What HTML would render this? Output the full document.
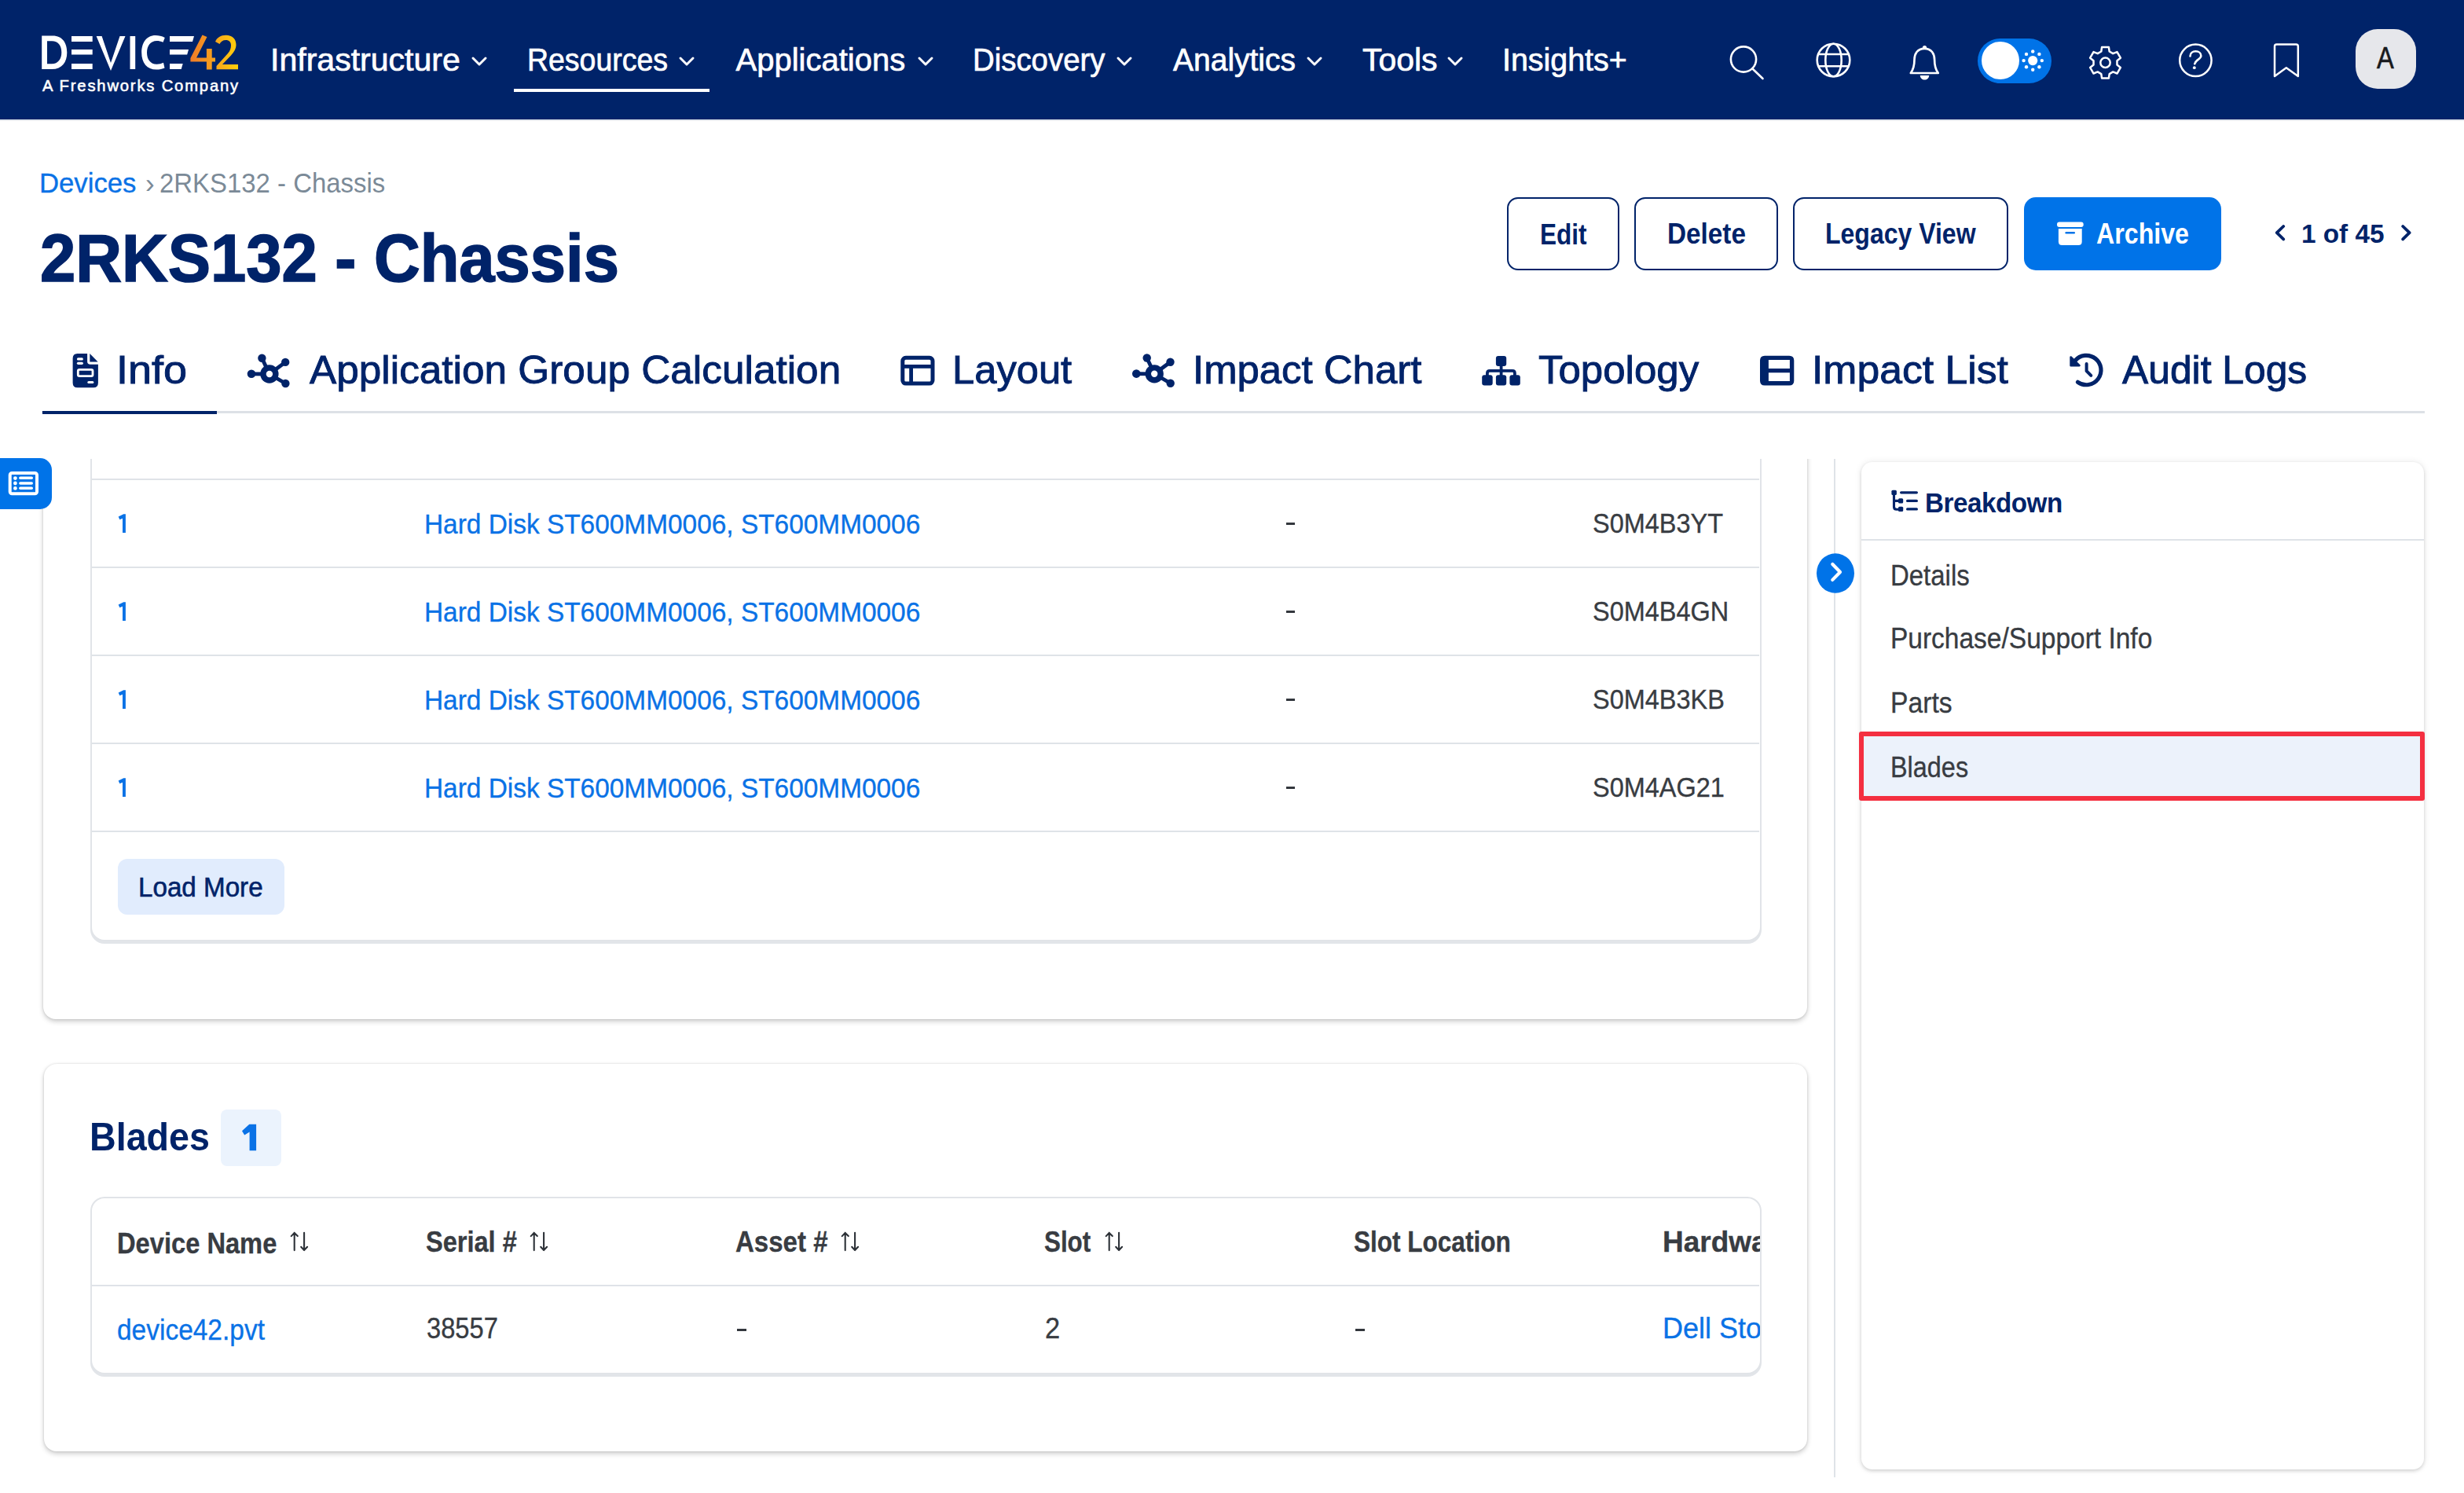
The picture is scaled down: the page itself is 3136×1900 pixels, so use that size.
<!DOCTYPE html>
<html><head><meta charset="utf-8">
<style>
*{margin:0;padding:0;box-sizing:border-box}
html,body{width:3136px;height:1900px;overflow:hidden;background:#fff;font-family:"Liberation Sans",sans-serif}
.a{position:absolute}
.t{position:absolute;white-space:nowrap;line-height:1}
.nav{color:#fff;-webkit-text-stroke:0.7px #fff}
.btn{position:absolute;top:251px;height:93px;border:2.5px solid #002369;border-radius:14px;background:#fff}
.navy{color:#002369}
.tab{color:#002369;-webkit-text-stroke:0.9px #002369}
.g{color:#383c42;-webkit-text-stroke:0.35px #383c42}
.lk{color:#0a72e6;-webkit-text-stroke:0.35px #0a72e6}
.card{position:absolute;background:#fff;border-radius:16px;box-shadow:0 3px 6px rgba(0,0,0,0.2),0 0 3px rgba(0,0,0,0.12)}
.tbl{position:absolute;background:#fff;border:2px solid #e1e4e8;border-radius:18px;box-shadow:0 3px 0 #e2e5e9}
.hl{position:absolute;height:2px;background:#dfe3e8}
svg{position:absolute;overflow:visible}
</style></head>
<body>
<div class="a" style="left:0;top:0;width:3136px;height:152px;background:#002369"></div>
<div class="a" style="left:0;top:152px;width:3136px;height:2px;background:#e6e9ee"></div>
<svg style="left:0;top:0" width="320" height="130" viewBox="0 0 320 130">
<defs><linearGradient id="lg" x1="242" y1="0" x2="303" y2="0" gradientUnits="userSpaceOnUse"><stop offset="0" stop-color="#ef7a28"/><stop offset="0.5" stop-color="#f7a21d"/><stop offset="1" stop-color="#ffd00a"/></linearGradient></defs>
<path d="M53.2 45.4 H67 C80 45.4 85.3 55 85.3 66.7 C85.3 79 79 88 66 88 H53.2 Z M60 52.3 V81.2 H66 C74 81.2 78.3 75 78.3 66.7 C78.3 58 74 52.3 66 52.3 Z" fill="#fff" fill-rule="evenodd"/>
<rect x="91" y="46" width="26.7" height="7" fill="#fff"/>
<rect x="91" y="63" width="26.7" height="6.5" fill="#fff"/>
<rect x="91" y="81" width="26.7" height="7" fill="#fff"/>
<path d="M122.6 46 H129.6 L141 80 L152.5 46 H159.5 L141 90 Z" fill="#fff"/>
<rect x="165.5" y="46" width="6.7" height="42" fill="#fff"/>
<path d="M209.8 48 C206 46 202 45.1 198 45.1 C186 45.1 180.2 55 180.2 67 C180.2 80 187 88.6 199 88.6 C203 88.6 207 87.8 209.5 86.5 L208 79.8 C205.5 81 202.5 81.8 199.5 81.8 C191.5 81.8 187 75.5 187 67 C187 58.5 191.5 52 199.5 52 C202 52 205 52.6 207.5 53.8 Z" fill="#fff"/>
<path d="M216 46 H247 L245 53 H216 Z" fill="#fff"/>
<path d="M216 63 H240 L238.2 69.5 H216 Z" fill="#fff"/>
<path d="M216 81 H232.7 L230.7 88 H216 Z" fill="#fff"/>
<path d="M257.5 44.5 L263.5 47 L250 73.5 H262.9 V62 H269.7 V73.5 H274 V78.6 H269.7 V88.6 H262.9 V78.6 H242.4 V74 Z" fill="url(#lg)"/>
<path d="M274 53 C276 48 281 44.8 287.5 44.8 C296 44.8 300.5 50 300.5 57 C300.5 62 298 66 294 70.5 L283 82 H303 V88.3 H275.5 V84 L290 68 C293 64.5 294 61 294 57.5 C294 53.5 291.5 51 287.5 51 C283.5 51 281 53 279.5 56 Z" fill="url(#lg)"/>
</svg>
<div class="t nav" style="left:53.80px;top:98.02px;font-size:21px;transform:scaleX(0.9618);transform-origin:0 0;-webkit-text-stroke:0.6px #fff;letter-spacing:1.9px">A Freshworks Company</div>
<div class="t nav" style="left:344.00px;top:56.14px;font-size:40px;transform:scaleX(1.0261);transform-origin:0 0;">Infrastructure</div>
<svg style="left:600px;top:72px" width="20" height="12" viewBox="0 0 20 12"><path d="M2 2 L10 10 L18 2" fill="none" stroke="#fff" stroke-width="3" stroke-linecap="round" stroke-linejoin="round"/></svg>
<div class="t nav" style="left:671.00px;top:56.14px;font-size:40px;transform:scaleX(0.9358);transform-origin:0 0;">Resources</div>
<svg style="left:864px;top:72px" width="20" height="12" viewBox="0 0 20 12"><path d="M2 2 L10 10 L18 2" fill="none" stroke="#fff" stroke-width="3" stroke-linecap="round" stroke-linejoin="round"/></svg>
<div class="t nav" style="left:936.50px;top:56.14px;font-size:40px;">Applications</div>
<svg style="left:1168px;top:72px" width="20" height="12" viewBox="0 0 20 12"><path d="M2 2 L10 10 L18 2" fill="none" stroke="#fff" stroke-width="3" stroke-linecap="round" stroke-linejoin="round"/></svg>
<div class="t nav" style="left:1238.00px;top:56.14px;font-size:40px;transform:scaleX(0.9593);transform-origin:0 0;">Discovery</div>
<svg style="left:1421px;top:72px" width="20" height="12" viewBox="0 0 20 12"><path d="M2 2 L10 10 L18 2" fill="none" stroke="#fff" stroke-width="3" stroke-linecap="round" stroke-linejoin="round"/></svg>
<div class="t nav" style="left:1493.00px;top:56.14px;font-size:40px;transform:scaleX(0.9748);transform-origin:0 0;">Analytics</div>
<svg style="left:1663px;top:72px" width="20" height="12" viewBox="0 0 20 12"><path d="M2 2 L10 10 L18 2" fill="none" stroke="#fff" stroke-width="3" stroke-linecap="round" stroke-linejoin="round"/></svg>
<div class="t nav" style="left:1734.00px;top:56.14px;font-size:40px;transform:scaleX(1.0220);transform-origin:0 0;">Tools</div>
<svg style="left:1842px;top:72px" width="20" height="12" viewBox="0 0 20 12"><path d="M2 2 L10 10 L18 2" fill="none" stroke="#fff" stroke-width="3" stroke-linecap="round" stroke-linejoin="round"/></svg>
<div class="t nav" style="left:1911.80px;top:56.14px;font-size:40px;transform:scaleX(0.9847);transform-origin:0 0;">Insights+</div>
<div class="a" style="left:654px;top:113px;width:249px;height:4px;background:#fff"></div>
<svg style="left:0;top:0" width="3136" height="152" viewBox="0 0 3136 152">
<g fill="none" stroke="#fff" stroke-width="2.6" stroke-linecap="round" stroke-linejoin="round">
<circle cx="2219" cy="75.5" r="16.1"/><path d="M2231 88 L2243.5 100"/>
<circle cx="2333.5" cy="76.5" r="20.8"/><ellipse cx="2333.5" cy="76.5" rx="10.2" ry="20.8"/><path d="M2314.5 69 H2352.5 M2314.5 84.2 H2352.5"/>
<path d="M2449.3 61.8 C2440 61.8 2436.5 69 2436.5 76 C2436.5 84 2435.5 88 2431.8 93 H2466.8 C2463 88 2462.1 84 2462.1 76 C2462.1 69 2458.6 61.8 2449.3 61.8 Z" stroke-width="2.7"/>
<g transform="translate(2679.5 79.8)"><path d="M-5.20 -14.28 L-4.39 -19.82 L4.39 -19.82 L5.20 -14.28 L9.77 -11.64 L14.97 -13.71 L19.36 -6.10 L14.97 -2.64 L14.97 2.64 L19.36 6.10 L14.97 13.71 L9.77 11.64 L5.20 14.28 L4.39 19.82 L-4.39 19.82 L-5.20 14.28 L-9.77 11.64 L-14.97 13.71 L-19.36 6.10 L-14.97 2.64 L-14.97 -2.64 L-19.36 -6.10 L-14.97 -13.71 L-9.77 -11.64 Z" stroke-width="2.5"/><circle r="6.2" stroke-width="2.5"/></g>
<circle cx="2794.4" cy="76.8" r="20.2" stroke-width="2.5"/>
<path d="M2787.5 71.5 C2787.5 67.5 2790.5 65.3 2794.5 65.3 C2798.5 65.3 2801.3 67.8 2801.3 71 C2801.3 75.5 2794.5 75.5 2793.3 81.3" stroke-width="2.6"/>
<path d="M2895 82.5 V59 Q2895 56.6 2897.4 56.6 H2922.4 Q2924.8 56.6 2924.8 59 V97 L2909.8 86.3 L2895 97 Z" stroke-width="2.5"/>
</g>
<g fill="#fff"><circle cx="2449.5" cy="60.5" r="2.6"/><path d="M2443.8 96 H2455.2 C2455.2 99.5 2452.5 101.5 2449.5 101.5 C2446.5 101.5 2443.8 99.5 2443.8 96 Z"/><circle cx="2792.8" cy="86.2" r="1.9"/></g>
<rect x="2517" y="49" width="94" height="57" rx="28.5" fill="#0073e8"/>
<circle cx="2546" cy="77" r="24" fill="#fff"/>
<g fill="#fff"><circle cx="2587.2" cy="77.1" r="6.1"/><circle cx="2587.2" cy="65.5" r="2.2"/><circle cx="2587.2" cy="88.7" r="2.2"/><circle cx="2575.6" cy="77.1" r="2.2"/><circle cx="2598.8" cy="77.1" r="2.2"/><circle cx="2579" cy="68.9" r="2.2"/><circle cx="2595.4" cy="68.9" r="2.2"/><circle cx="2579" cy="85.3" r="2.2"/><circle cx="2595.4" cy="85.3" r="2.2"/></g>
<rect x="2998" y="37" width="77" height="76" rx="28" fill="#e6e7eb"/>
</svg>
<div class="t " style="left:3025.40px;top:54.73px;font-size:38px;transform:scaleX(0.8587);transform-origin:0 0;color:#18191c;-webkit-text-stroke:0.6px #18191c">A</div>
<div class="t lk" style="left:50.00px;top:215.37px;font-size:35px;transform:scaleX(0.9917);transform-origin:0 0;">Devices</div>
<div class="t " style="left:185.00px;top:215.37px;font-size:35px;color:#7b8a97">›</div>
<div class="t " style="left:203.00px;top:215.37px;font-size:35px;transform:scaleX(0.9404);transform-origin:0 0;color:#7b8a97">2RKS132 - Chassis</div>
<div class="t navy" style="left:51.00px;top:285.55px;font-size:85px;font-weight:bold;transform:scaleX(0.9569);transform-origin:0 0;-webkit-text-stroke:1.6px #002369">2RKS132 - Chassis</div>
<div class="btn" style="left:1918px;width:143px"></div>
<div class="btn" style="left:2080px;width:183px"></div>
<div class="btn" style="left:2282px;width:274px"></div>
<div class="t navy" style="left:1960.00px;top:280.28px;font-size:37px;font-weight:bold;transform:scaleX(0.8520);transform-origin:0 0;">Edit</div>
<div class="t navy" style="left:2122.00px;top:278.68px;font-size:37px;font-weight:bold;transform:scaleX(0.9004);transform-origin:0 0;">Delete</div>
<div class="t navy" style="left:2323.20px;top:278.68px;font-size:37px;font-weight:bold;transform:scaleX(0.8649);transform-origin:0 0;">Legacy View</div>
<div class="a" style="left:2576px;top:251px;width:251px;height:93px;border-radius:15px;background:#0073e8"></div>
<svg style="left:0;top:0" width="2700" height="330" viewBox="0 0 2700 330"><rect x="2618" y="282.5" width="33.7" height="6.6" rx="3" fill="#fff"/><path d="M2619.9 291 H2649.7 V307.5 Q2649.7 312 2645.2 312 H2624.4 Q2619.9 312 2619.9 307.5 Z" fill="#fff"/><rect x="2628.4" y="294.9" width="12.6" height="2.7" rx="1.35" fill="#0073e8"/></svg>
<div class="t " style="left:2667.50px;top:278.68px;font-size:37px;font-weight:bold;transform:scaleX(0.8692);transform-origin:0 0;color:#fff">Archive</div>
<svg style="left:0;top:0" width="3136" height="330" viewBox="0 0 3136 330"><path d="M2906.2 288 L2897.8 296.2 L2906.2 304.4 M3058.2 288 L3066.6 296.2 L3058.2 304.4" fill="none" stroke="#002369" stroke-width="3.8" stroke-linecap="round" stroke-linejoin="round"/></svg>
<div class="t navy" style="left:2929.00px;top:280.22px;font-size:34px;font-weight:bold;transform:scaleX(0.9795);transform-origin:0 0;">1 of 45</div>
<div class="a" style="left:53px;top:523px;width:3033px;height:3px;background:#dde1e6"></div>
<div class="a" style="left:54px;top:523px;width:222px;height:4px;background:#002369"></div>
<div class="t tab" style="left:147.80px;top:446.18px;font-size:50px;transform:scaleX(1.0808);transform-origin:0 0;">Info</div>
<div class="t tab" style="left:393.80px;top:446.18px;font-size:50px;transform:scaleX(1.0265);transform-origin:0 0;">Application Group Calculation</div>
<div class="t tab" style="left:1212.00px;top:446.18px;font-size:50px;transform:scaleX(1.0137);transform-origin:0 0;">Layout</div>
<div class="t tab" style="left:1518.00px;top:446.18px;font-size:50px;transform:scaleX(1.0177);transform-origin:0 0;">Impact Chart</div>
<div class="t tab" style="left:1958.00px;top:446.18px;font-size:50px;transform:scaleX(1.0202);transform-origin:0 0;">Topology</div>
<div class="t tab" style="left:2306.00px;top:446.18px;font-size:50px;transform:scaleX(1.0336);transform-origin:0 0;">Impact List</div>
<div class="t tab" style="left:2701.00px;top:446.18px;font-size:50px;transform:scaleX(0.9957);transform-origin:0 0;">Audit Logs</div>
<svg style="left:0;top:0" width="3136" height="520" viewBox="0 0 3136 520">
<path fill="#002369" d="M98.6 450 H111.1 V460 Q111.1 463.8 114.9 463.8 H124.9 V487.3 Q124.9 493.3 118.9 493.3 H98.6 Q92.6 493.3 92.6 487.3 V456 Q92.6 450 98.6 450 Z"/>
<path fill="#002369" d="M114.3 450.1 L124.6 460.6 H114.3 Z"/>
<g fill="#fff"><rect x="97.9" y="455.3" width="8" height="3.2" rx="1.6"/><rect x="97.9" y="460.7" width="8" height="3.2" rx="1.6"/><rect x="111.3" y="485" width="8.1" height="3.1" rx="1.55"/></g>
<rect x="99.3" y="470.4" width="18.7" height="8.2" rx="1.8" fill="none" stroke="#fff" stroke-width="2.8"/>
<rect x="1148.8" y="455.3" width="38.2" height="32.8" rx="4" fill="none" stroke="#002369" stroke-width="5"/>
<path d="M1148.8 466.3 H1187 M1159.6 466.3 V488" stroke="#002369" stroke-width="4.8"/>
<path fill="#002369" fill-rule="evenodd" d="M2246 452.8 H2277.3 Q2283.3 452.8 2283.3 458.8 V484.6 Q2283.3 490.6 2277.3 490.6 H2246 Q2240 490.6 2240 484.6 V458.8 Q2240 452.8 2246 452.8 Z M2250.9 457.9 V469 H2277.9 V457.9 Z M2250.9 474.3 V485.1 H2277.9 V474.3 Z"/>
<g fill="#002369"><rect x="1903.9" y="453" width="13.3" height="13" rx="3"/><rect x="1886.2" y="477.2" width="13.5" height="13.4" rx="3"/><rect x="1903.9" y="477.2" width="13.3" height="13.4" rx="3"/><rect x="1921.4" y="477.2" width="13.4" height="13.4" rx="3"/></g>
<path d="M1910.6 465 V478 M1892.9 478 V475 Q1892.9 471.8 1896 471.8 H1925 Q1927.9 471.8 1927.9 475 V478" fill="none" stroke="#002369" stroke-width="3.8"/>
<path d="M2644.5 486.3 A18.7 18.7 0 1 0 2641 459" fill="none" stroke="#002369" stroke-width="5.2" stroke-linecap="round"/>
<path d="M2635.6 454.5 L2646.5 465.2 H2635.6 Z" fill="#002369" stroke="#002369" stroke-width="2.6" stroke-linejoin="round"/>
<path d="M2655.6 463 V472.2 L2661.3 477.9" fill="none" stroke="#002369" stroke-width="4" stroke-linecap="round" stroke-linejoin="round"/>
</svg>
<svg style="left:0;top:0" width="3136" height="520" viewBox="0 0 3136 520"><g transform="translate(342.9 476)" fill="#002369"><path d="M0 0 L-9.5 -20.3 M0 0 L20.3 -15.1 M0 0 L-22.9 -0.2 M0 0 L20.5 12" stroke="#002369" stroke-width="4.8"/><circle cx="-9.5" cy="-20.3" r="5.2"/><circle cx="20.3" cy="-15.1" r="5.2"/><circle cx="-22.9" cy="-0.2" r="5.3"/><circle cx="20.5" cy="12" r="5.2"/><circle r="11.65"/><circle r="4.2" fill="#fff"/></g></svg>
<svg style="left:0;top:0" width="3136" height="520" viewBox="0 0 3136 520"><g transform="translate(1469.2 475.8)" fill="#002369"><path d="M0 0 L-9.5 -20.3 M0 0 L20.3 -15.1 M0 0 L-22.9 -0.2 M0 0 L20.5 12" stroke="#002369" stroke-width="4.8"/><circle cx="-9.5" cy="-20.3" r="5.2"/><circle cx="20.3" cy="-15.1" r="5.2"/><circle cx="-22.9" cy="-0.2" r="5.3"/><circle cx="20.5" cy="12" r="5.2"/><circle r="11.65"/><circle r="4.2" fill="#fff"/></g></svg>
<div class="a" style="left:0;top:584px;width:3136px;height:1316px;overflow:hidden">
<div class="card" style="left:55px;top:-184px;width:2245px;height:897px"></div>
<div class="tbl" style="left:115px;top:-164px;width:2127px;height:778px"></div>
<div class="hl" style="left:117px;top:25px;width:2122px"></div>
<div class="hl" style="left:117px;top:137px;width:2122px"></div>
<div class="hl" style="left:117px;top:249px;width:2122px"></div>
<div class="hl" style="left:117px;top:361px;width:2122px"></div>
<div class="hl" style="left:117px;top:473px;width:2122px"></div>
<svg style="left:0;top:-584px" width="200" height="1100" viewBox="0 0 200 1100"><path transform="translate(0 0)" d="M157.3 654.3 H159.9 V677.9 H156 V659.8 L152.3 661.3 L150.7 657.4 Z" fill="#0a72e6"/></svg>
<div class="t lk" style="left:540.40px;top:65.80px;font-size:34.5px;transform:scaleX(0.9683);transform-origin:0 0;">Hard Disk ST600MM0006, ST600MM0006</div>
<div class="a" style="left:1637px;top:80.5px;width:11px;height:3px;background:#33373d"></div>
<div class="t g" style="left:2027.00px;top:65.20px;font-size:34.5px;transform:scaleX(0.9410);transform-origin:0 0;">S0M4B3YT</div>
<svg style="left:0;top:-584px" width="200" height="1100" viewBox="0 0 200 1100"><path transform="translate(0 112)" d="M157.3 654.3 H159.9 V677.9 H156 V659.8 L152.3 661.3 L150.7 657.4 Z" fill="#0a72e6"/></svg>
<div class="t lk" style="left:540.40px;top:177.80px;font-size:34.5px;transform:scaleX(0.9683);transform-origin:0 0;">Hard Disk ST600MM0006, ST600MM0006</div>
<div class="a" style="left:1637px;top:192.5px;width:11px;height:3px;background:#33373d"></div>
<div class="t g" style="left:2027.00px;top:177.20px;font-size:34.5px;transform:scaleX(0.9410);transform-origin:0 0;">S0M4B4GN</div>
<svg style="left:0;top:-584px" width="200" height="1100" viewBox="0 0 200 1100"><path transform="translate(0 224)" d="M157.3 654.3 H159.9 V677.9 H156 V659.8 L152.3 661.3 L150.7 657.4 Z" fill="#0a72e6"/></svg>
<div class="t lk" style="left:540.40px;top:289.80px;font-size:34.5px;transform:scaleX(0.9683);transform-origin:0 0;">Hard Disk ST600MM0006, ST600MM0006</div>
<div class="a" style="left:1637px;top:304.5px;width:11px;height:3px;background:#33373d"></div>
<div class="t g" style="left:2027.00px;top:289.20px;font-size:34.5px;transform:scaleX(0.9410);transform-origin:0 0;">S0M4B3KB</div>
<svg style="left:0;top:-584px" width="200" height="1100" viewBox="0 0 200 1100"><path transform="translate(0 336)" d="M157.3 654.3 H159.9 V677.9 H156 V659.8 L152.3 661.3 L150.7 657.4 Z" fill="#0a72e6"/></svg>
<div class="t lk" style="left:540.40px;top:401.80px;font-size:34.5px;transform:scaleX(0.9683);transform-origin:0 0;">Hard Disk ST600MM0006, ST600MM0006</div>
<div class="a" style="left:1637px;top:416.5px;width:11px;height:3px;background:#33373d"></div>
<div class="t g" style="left:2027.00px;top:401.20px;font-size:34.5px;transform:scaleX(0.9410);transform-origin:0 0;">S0M4AG21</div>
<div class="a" style="left:150px;top:509px;width:212px;height:71px;border-radius:12px;background:#e1ecfd"></div>
<div class="t navy" style="left:176.00px;top:526.87px;font-size:35px;transform:scaleX(0.9479);transform-origin:0 0;-webkit-text-stroke:0.6px #002369">Load More</div>
<div class="card" style="left:56px;top:770px;width:2244px;height:493px"></div>
<div class="t navy" style="left:114.00px;top:837.67px;font-size:50px;font-weight:bold;transform:scaleX(0.9327);transform-origin:0 0;">Blades</div>
<div class="a" style="left:281px;top:828px;width:77px;height:72px;border-radius:8px;background:#ebf3fd"></div>
<svg style="left:0;top:-584px" width="400" height="1500" viewBox="0 0 400 1500"><path d="M317.3 1430.7 H326.1 V1464.2 H317.6 V1440.6 L311.2 1444.6 L308 1439.2 Z" fill="#0a72e6"/></svg>
<div class="tbl" style="left:115px;top:939px;width:2127px;height:226px;overflow:hidden">
<div class="hl" style="left:0;top:110px;width:2122px"></div>
<div class="t g" style="left:32.00px;top:38.58px;font-size:37px;font-weight:bold;transform:scaleX(0.8826);transform-origin:0 0;">Device Name</div>
<svg style="left:243px;top:35px" width="40" height="40" viewBox="0 0 40 40"><path d="M14.7 31.1 V8.8 M10.7 13.1 L14.7 8.9 L18.8 13.1 M27.1 8.8 V31.1 M23.2 26.8 L27.1 31 L31.1 26.8" fill="none" stroke="#2d3238" stroke-width="2.1" stroke-linecap="round" stroke-linejoin="round"/></svg>
<div class="t g" style="left:424.90px;top:36.68px;font-size:37px;font-weight:bold;transform:scaleX(0.8795);transform-origin:0 0;">Serial #</div>
<svg style="left:548px;top:35px" width="40" height="40" viewBox="0 0 40 40"><path d="M14.7 31.1 V8.8 M10.7 13.1 L14.7 8.9 L18.8 13.1 M27.1 8.8 V31.1 M23.2 26.8 L27.1 31 L31.1 26.8" fill="none" stroke="#2d3238" stroke-width="2.1" stroke-linecap="round" stroke-linejoin="round"/></svg>
<div class="t g" style="left:819.00px;top:36.68px;font-size:37px;font-weight:bold;transform:scaleX(0.8926);transform-origin:0 0;">Asset #</div>
<svg style="left:944px;top:35px" width="40" height="40" viewBox="0 0 40 40"><path d="M14.7 31.1 V8.8 M10.7 13.1 L14.7 8.9 L18.8 13.1 M27.1 8.8 V31.1 M23.2 26.8 L27.1 31 L31.1 26.8" fill="none" stroke="#2d3238" stroke-width="2.1" stroke-linecap="round" stroke-linejoin="round"/></svg>
<div class="t g" style="left:1212.40px;top:36.68px;font-size:37px;font-weight:bold;transform:scaleX(0.8465);transform-origin:0 0;">Slot</div>
<svg style="left:1280px;top:35px" width="40" height="40" viewBox="0 0 40 40"><path d="M14.7 31.1 V8.8 M10.7 13.1 L14.7 8.9 L18.8 13.1 M27.1 8.8 V31.1 M23.2 26.8 L27.1 31 L31.1 26.8" fill="none" stroke="#2d3238" stroke-width="2.1" stroke-linecap="round" stroke-linejoin="round"/></svg>
<div class="t g" style="left:1606.40px;top:36.68px;font-size:37px;font-weight:bold;transform:scaleX(0.8522);transform-origin:0 0;">Slot Location</div>
<div class="t g" style="left:1999.00px;top:36.68px;font-size:37px;font-weight:bold;">Hardware Model</div>
<div class="a" style="left:821px;top:166px;width:12px;height:3px;background:#33373d"></div>
<div class="a" style="left:1608px;top:166px;width:12px;height:3px;background:#33373d"></div>
<div class="t lk" style="left:32.00px;top:149.93px;font-size:36px;transform:scaleX(0.9298);transform-origin:0 0;">device42.pvt</div>
<div class="t g" style="left:426.20px;top:147.53px;font-size:36px;transform:scaleX(0.9072);transform-origin:0 0;">38557</div>
<div class="t g" style="left:1212.50px;top:147.53px;font-size:36px;transform:scaleX(0.9573);transform-origin:0 0;">2</div>
<div class="t lk" style="left:1999.00px;top:147.53px;font-size:36px;">Dell Storage</div>
</div>
</div>
<div class="a" style="left:0;top:583px;width:66px;height:65px;border-radius:0 15px 15px 0;background:#0073e8"></div>
<svg style="left:0;top:0" width="80" height="660" viewBox="0 0 80 660"><rect x="12.7" y="601.9" width="34.3" height="26.3" rx="2.5" fill="none" stroke="#fff" stroke-width="4"/><g fill="#fff"><circle cx="19.4" cy="608.6" r="2.4"/><circle cx="19.4" cy="615" r="2.4"/><circle cx="19.4" cy="621.4" r="2.4"/><rect x="24.1" y="606.6" width="17.9" height="3.5" rx="1.75"/><rect x="24.1" y="613.2" width="17.9" height="3.5" rx="1.75"/><rect x="24.1" y="619.6" width="17.9" height="3.5" rx="1.75"/></g></svg>
<div class="a" style="left:2334px;top:584px;width:2px;height:1296px;background:#dfe3e8"></div>
<svg style="left:0;top:0" width="2400" height="800" viewBox="0 0 2400 800"><ellipse cx="2336" cy="729.5" rx="24" ry="25.3" fill="#0073e8"/><path d="M2332.3 718 L2342 728 L2332.3 737.9" fill="none" stroke="#fff" stroke-width="4.2" stroke-linecap="round" stroke-linejoin="round"/></svg>
<div class="card" style="left:2369px;top:588px;width:716px;height:1282px;border-radius:14px;box-shadow:0 2px 4px rgba(0,0,0,0.14),0 0 10px rgba(0,0,0,0.09)"></div>
<div class="a" style="left:2369px;top:686px;width:716px;height:2px;background:#dfe3e8"></div>
<svg style="left:0;top:0" width="2500" height="700" viewBox="0 0 2500 700"><g fill="#002369"><rect x="2407.4" y="623.7" width="6.5" height="6.2" rx="1.5"/><rect x="2416" y="634.3" width="6.2" height="6.2" rx="1.5"/><rect x="2416" y="644.8" width="6.2" height="6.1" rx="1.5"/></g><path d="M2410.5 629 V645 Q2410.5 648.3 2413.8 648.3 H2417 M2410.5 637.4 H2417" fill="none" stroke="#002369" stroke-width="3.1"/><path d="M2419.6 626.8 H2439.4 M2427.6 637.4 H2439.4 M2427.6 647.9 H2439.4" stroke="#002369" stroke-width="3.2" stroke-linecap="round"/></svg>
<div class="t navy" style="left:2449.50px;top:621.87px;font-size:35px;font-weight:bold;transform:scaleX(0.9487);transform-origin:0 0;letter-spacing:-0.5px">Breakdown</div>
<div class="a" style="left:2366px;top:931px;width:720px;height:88px;border:6px solid #f42f40;border-radius:3px;background:#ecf2fb"></div>
<div class="t g" style="left:2406.00px;top:714.93px;font-size:36px;transform:scaleX(0.9152);transform-origin:0 0;">Details</div>
<div class="t g" style="left:2405.80px;top:794.53px;font-size:36px;transform:scaleX(0.9303);transform-origin:0 0;">Purchase/Support Info</div>
<div class="t g" style="left:2406.00px;top:877.03px;font-size:36px;transform:scaleX(0.9353);transform-origin:0 0;">Parts</div>
<div class="t g" style="left:2406.00px;top:959.33px;font-size:36px;transform:scaleX(0.9003);transform-origin:0 0;">Blades</div>
</body></html>
